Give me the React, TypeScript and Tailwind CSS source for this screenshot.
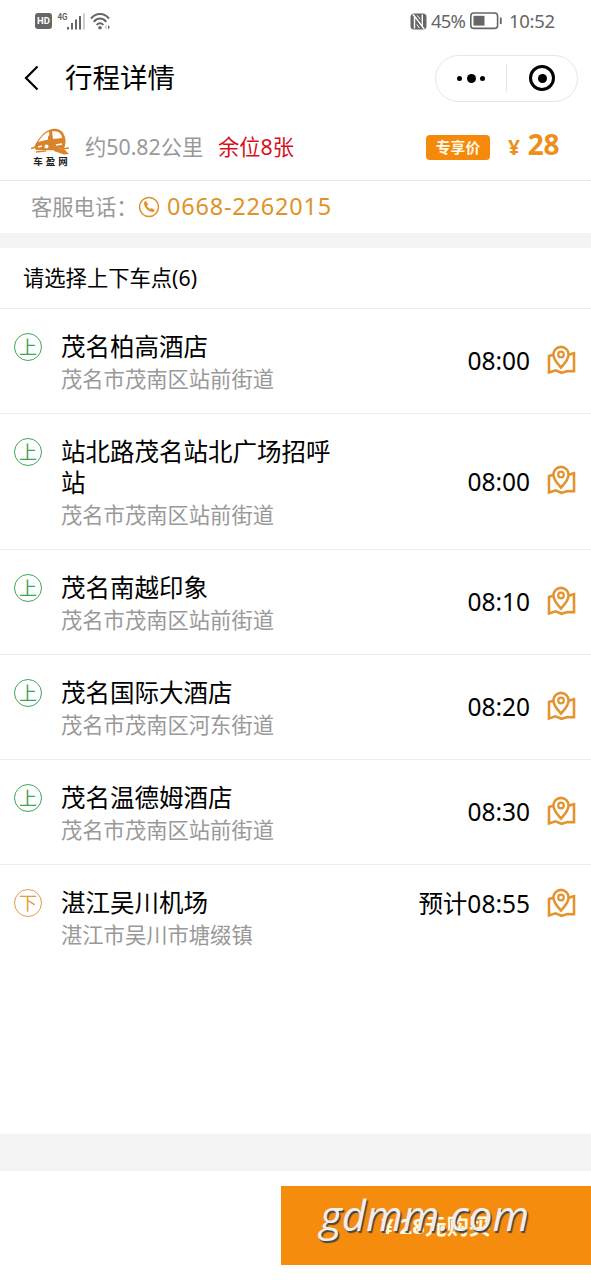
type Stop = {
  kind: "on" | "off";
  name: string;
  area: string;
  time: string;
};

const stops: Stop[] = [
  { kind: "on", name: "茂名柏高酒店", area: "茂名市茂南区站前街道", time: "08:00" },
  { kind: "on", name: "站北路茂名站北广场招呼站", area: "茂名市茂南区站前街道", time: "08:00" },
  { kind: "on", name: "茂名南越印象", area: "茂名市茂南区站前街道", time: "08:10" },
  { kind: "on", name: "茂名国际大酒店", area: "茂名市茂南区河东街道", time: "08:20" },
  { kind: "on", name: "茂名温德姆酒店", area: "茂名市茂南区站前街道", time: "08:30" },
  { kind: "off", name: "湛江吴川机场", area: "湛江市吴川市塘缀镇", time: "预计08:55" },
];

const kinds = {
  on: { label: "上", className: "border-[#3fa556] text-[#3fa556]" },
  off: { label: "下", className: "border-[#dfa040] text-[#dfa040]" },
};

export default function App() {
  return (
    <div className="flex h-[1280px] w-[591px] flex-col overflow-hidden bg-white font-['Noto_Sans','Noto_Sans_CJK_SC',sans-serif] text-black">
      <StatusBar />
      <NavBar />
      <TripSummary />
      <div className="h-[15px] flex-none bg-[#f4f4f4]" />
      <h2 className="flex h-[61px] flex-none items-center border-b border-[#ececec] pl-[23px] text-[21.3px]">请选择上下车点(6)</h2>
      <ul className="flex-1">
        {stops.map((stop, index) => (
          <StopRow key={stop.name} stop={stop} last={index === stops.length - 1} />
        ))}
      </ul>
      <div className="h-[37px] flex-none bg-[#f4f4f4]" />
      <BuyBar />
    </div>
  );
}

function StatusBar() {
  return (
    <div className="flex h-[42px] flex-none items-center justify-between pl-[35px] pr-[36px] text-[#666]">
      <div className="flex items-center">
        <span className="flex h-4 w-[17px] items-center justify-center rounded-[3px] bg-[#666] font-['Roboto'] text-[9.5px] font-bold text-white">HD</span>
        <svg className="ml-[5px]" width="28" height="20" viewBox="0 0 28 20" fill="currentColor">
          <text x="0.5" y="8.5" fontFamily="Roboto" fontSize="9" fontWeight="700" textLength="10" lengthAdjust="spacingAndGlyphs">4G</text>
          <rect x="10" y="16" width="2" height="2.5" />
          <rect x="14" y="12" width="2" height="6.5" />
          <rect x="18" y="8.5" width="2" height="10" />
          <rect x="22" y="5" width="2" height="13.5" />
          <rect x="26" y="2.5" width="2" height="16" fill="#ccc" />
        </svg>
        <svg className="ml-[5px]" width="22" height="19" viewBox="0 0 22 19" fill="none" stroke="currentColor" strokeWidth="2">
          <path d="M1 6.5C6 .5 14 .5 19 6.5M3.8 9.8c3.4-4.4 9-4.4 12.4 0M6.6 13c1.9-2.4 4.9-2.4 6.8 0" />
          <circle cx="10" cy="15.8" r="1.8" fill="currentColor" stroke="none" />
          <path d="M16.5 13l-1.8 2.3 1.8 2.3z" fill="#bbb" stroke="none" />
          <path d="M18 13l1.8 2.3-1.8 2.3z" fill="currentColor" stroke="none" />
        </svg>
      </div>
      <div className="flex items-center text-[18.5px]">
        <svg width="17" height="17" viewBox="0 0 17 17">
          <rect x="0.5" y="0.5" width="16" height="16" rx="3.5" fill="#666" />
          <path d="M4.5 15.5V3.2l7.8 10.5V1.5M4.5 3.2L2.7 1.5M12.3 13.7l2 2" fill="none" stroke="#fff" strokeWidth="1.4" />
          <path d="M7.2 2.3l3 4M6.7 11.4l2.8 3.8" stroke="#fff" strokeWidth="1" />
        </svg>
        <span className="ml-1 w-[39px] tracking-[-0.8px]">45%</span>
        <svg width="32" height="18" viewBox="0 0 32 18" fill="none" stroke="currentColor">
          <rect x="0.8" y="1" width="26.8" height="15.4" rx="3" strokeWidth="1.6" />
          <rect x="3.5" y="3.8" width="11" height="9.8" fill="currentColor" stroke="none" />
          <path d="M30.8 5.5v6.5" strokeWidth="1.8" />
        </svg>
        <span className="ml-[7px] w-[46px] tracking-[-0.3px]">10:52</span>
      </div>
    </div>
  );
}

function NavBar() {
  return (
    <header className="flex h-[72px] flex-none items-center pl-6 pr-[13px]">
      <svg width="15" height="26" viewBox="0 0 15 26" fill="none" stroke="#000" strokeWidth="2.2">
        <path d="M13.5 1.5L2 13l11.5 11.5" />
      </svg>
      <h1 className="ml-[26px] text-[27.5px] leading-none">行程详情</h1>
      <div className="ml-auto flex h-[47px] w-[143px] items-center rounded-full border border-[#e6e6e6]">
        <div className="flex h-7 w-[71px] items-center justify-center gap-[4.5px] border-r border-[#e6e6e6]">
          <span className="size-[5px] rounded-full bg-black" />
          <span className="size-[9px] rounded-full bg-black" />
          <span className="size-[5px] rounded-full bg-black" />
        </div>
        <div className="flex flex-1 justify-center">
          <span className="flex size-[26px] items-center justify-center rounded-full border-[3.5px] border-black">
            <span className="size-[9px] rounded-full bg-black" />
          </span>
        </div>
      </div>
    </header>
  );
}

function TripSummary() {
  return (
    <section className="flex-none">
      <div className="flex h-[67px] items-center border-b border-[#e8e8e8] pl-[31px] pr-8">
        <div className="flex w-[39px] flex-col items-center">
          <BusLogo />
          <span className="mt-px text-[9.5px] font-bold leading-[11px] tracking-[3px] text-[#222] -mr-[3px]">车盈网</span>
        </div>
        <span className="ml-[15px] w-[133px] whitespace-nowrap text-[21.3px] text-[#999]">约50.82公里</span>
        <span className="whitespace-nowrap text-[21.3px] text-[#d8101c]">余位8张</span>
        <span className="ml-auto flex h-[25px] w-16 items-center justify-center rounded-[4px] bg-[#f4890b] text-[14.8px] font-bold text-[#fffae8]">专享价</span>
        <span className="ml-[18px] flex w-[51px] items-baseline justify-between font-bold text-[#ec8f1b]">
          <span className="text-[21px]">¥</span>
          <span className="text-[28px] leading-none tracking-[-0.4px]">28</span>
        </span>
      </div>
      <div className="flex h-[52px] items-center pl-[31px] text-[21.3px] text-[#999]">
        <span className="w-[107px] whitespace-nowrap">客服电话：</span>
        <svg width="22" height="22" viewBox="0 0 22 22">
          <circle cx="11" cy="11" r="9.5" fill="none" stroke="#e0922b" strokeWidth="1.5" />
          <path d="M6.4 5.8l1.3-.7 2.5 3.2-1.2 1.4c.6 1.4 1.7 2.5 3.2 3.2l1.5-1 3 2.2-.6 1.4c-1.4 1.2-4.2.4-6.600-1.700S5.300 8 6.400 5.800z" fill="#e0922b" />
        </svg>
        <span className="ml-[7px] text-[23.500px] tracking-[0.8px] text-[#e0922b]">0668-2262015</span>
      </div>
    </section>
  );
}

function StopRow({ stop, last }: { stop: Stop; last: boolean }) {
  const kind = kinds[stop.kind];

  return (
    <li className={`flex pl-[14px] pr-[15px] ${last ? "items-start" : "items-center border-b border-[#ececec]"}`}>
      <span className={`mt-6 flex size-7 flex-none items-center justify-center self-start rounded-full border-[1.5px] text-[18px] leading-none ${kind.className}`}>
        {kind.label}
      </span>
      <div className="ml-[19px] w-[275px] pb-[18px] pt-[22px]">
        <p className="text-[24.5px] leading-[31px]">{stop.name}</p>
        <p className="text-[21.3px] leading-[33px] text-[#999]">{stop.area}</p>
      </div>
      <div className={`ml-auto flex items-center ${last ? "mt-[22px]" : ""}`}>
        <span className="whitespace-nowrap text-[24.5px] leading-[34px]">{stop.time}</span>
        <MapPinIcon />
      </div>
    </li>
  );
}

function BuyBar() {
  return (
    <footer className="flex h-[109px] flex-none justify-end pt-[15px]">
      <button className="relative flex h-[79px] w-[310px] items-center justify-center bg-[#f58c0e] text-[22px] font-bold text-[#fffbe0]">
        <span className="whitespace-nowrap">¥ 28元购买</span>
        <span className="absolute left-[39px] top-0 font-['Open_Sans'] text-[42px] font-normal italic leading-[58px] text-[#eee] [text-shadow:1.5px_1.5px_1px_#444]">
          gdmm.com
        </span>
      </button>
    </footer>
  );
}

function MapPinIcon() {
  return (
    <svg className="-mt-[3px] ml-[17px] flex-none" width="29" height="30" viewBox="0 0 29 30" fill="none" stroke="#e39430" strokeWidth="2.6">
      <path d="M6.300 9.700L2 11v16.500l6.500-2.200 6 2.500 6-1.800 6.500.2V8.200l-5.700 1.500" />
      <path d="M14 22.500C9.500 17.800 6.400 14 6.400 9.500a7.600 7.600 0 0 1 15.200 0c0 4.500-3.100 8.300-7.600 13z" />
      <circle cx="14" cy="9.500" r="2.800" strokeWidth="2.200" />
    </svg>
  );
}

function BusLogo() {
  return (
    <svg width="39" height="27" viewBox="0 0 39 27">
      <path d="M4 17C8 10 13 3 21 1c6-1 11 2 12 6 2 3 2 9 0 13-7 1-12 3-17 2H7c-3 0-4-2-3-5z" fill="#d9832b" />
      <path d="M7 14c3-5 7-9 11-10.500L19 11l-8 2zM21 3.500c4-1 8 0 9.500 4L31 10l-9 1z" fill="#fff" />
      <path d="M0 20.500l6-2M5 24c9-1 19-2 33-4" fill="none" stroke="#d9832b" strokeWidth="1.500" />
      <path d="M20 22l13-1 5 5-5 .5z" fill="#d9832b" />
      <path d="M7 19l4-1M25 17l6-1M15 23h8" stroke="#fff" strokeWidth="1.500" />
      <circle cx="15.500" cy="18.500" r="2" fill="#fff" />
      <path d="M17 8.500l2-2 1 5-3 .5z" fill="#d9832b" />
    </svg>
  );
}
